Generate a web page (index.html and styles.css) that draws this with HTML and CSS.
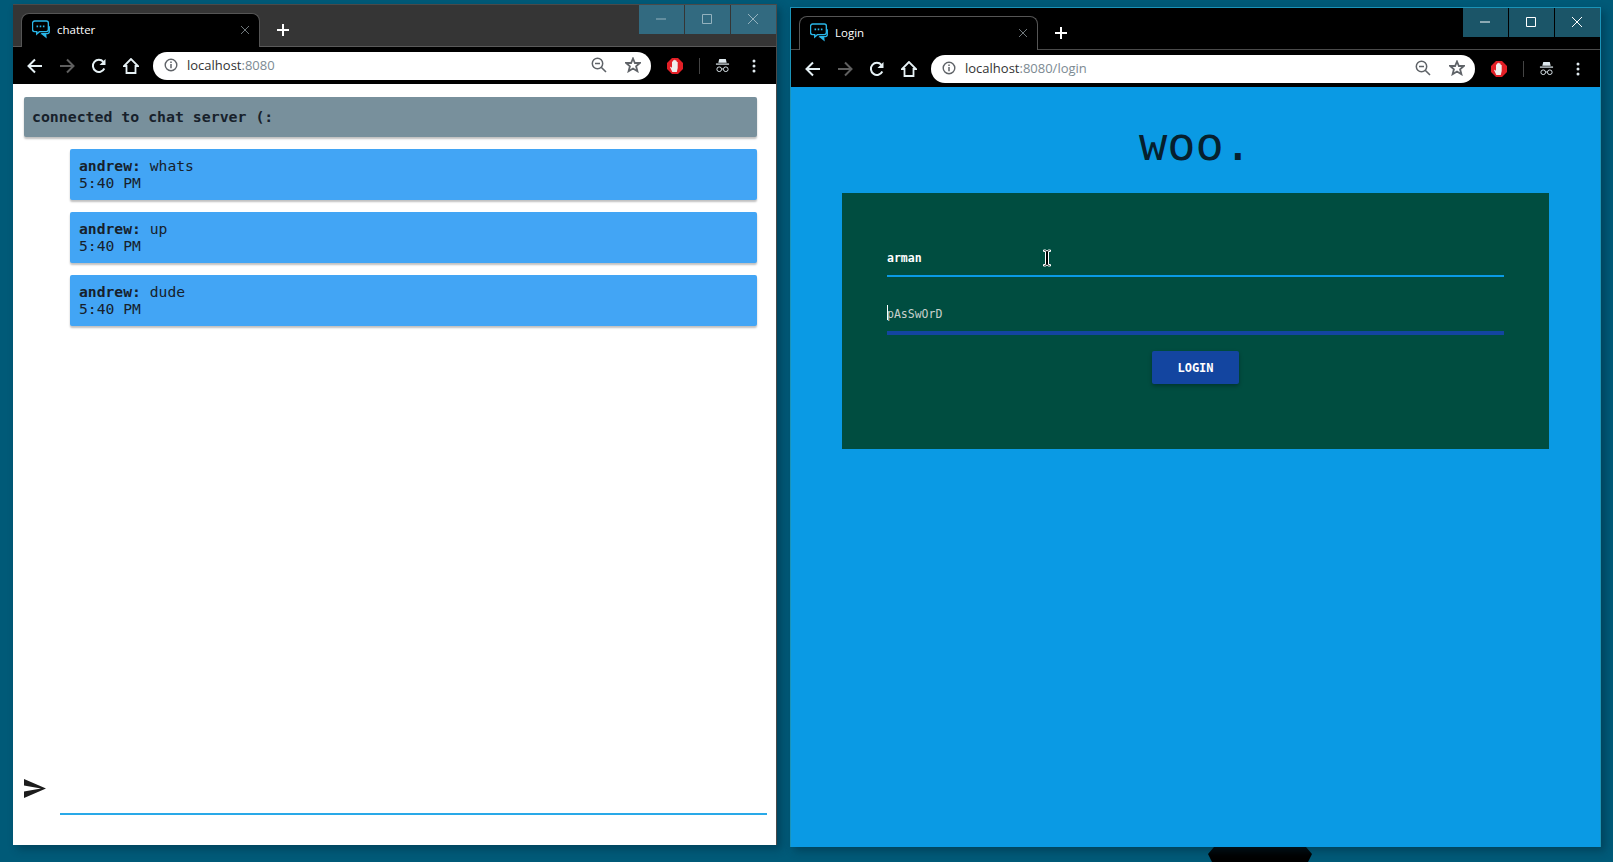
FILE: index.html

```html
<!DOCTYPE html>
<html lang="en">
  <head>
    <meta charset="UTF-8" />
    <title>chatter and login windows</title>
    <link rel="stylesheet" href="styles.css">
  </head>
  <body>
    <svg class="defs" width="0" height="0">
      <symbol id="i-chat" viewBox="0 0 18 18">
        <path d="M2.500 1h11a2 2 0 0 1 2 2v6a2 2 0 0 1-2 2H7l-2.500 2.200V11h-2a2 2 0 0 1-2-2V3a2 2 0 0 1 2-2z" fill="none" stroke="currentColor" stroke-width="1.300"/>
        <path d="M4.300 6h1.500M7.300 6h1.500M10.300 6h1.500" stroke="currentColor" stroke-width="1.500"/>
        <path d="M17 6v5a2.500 2.500 0 0 1-2.500 2.500h-1l.5 4-5-4H8l1-1.200h5.500a1.300 1.300 0 0 0 1.300-1.300V6z" fill="currentColor"/>
      </symbol>
      <symbol id="i-back" viewBox="0 0 16 16">
        <path d="M15 8H2M8 1.500 1.500 8 8 14.500" fill="none" stroke="currentColor" stroke-width="2"/>
      </symbol>
      <symbol id="i-fwd" viewBox="0 0 16 16">
        <path d="M1 8h13M8 1.500 14.500 8 8 14.500" fill="none" stroke="currentColor" stroke-width="2"/>
      </symbol>
      <symbol id="i-reload" viewBox="0 0 16 16">
        <path d="M13.300 10.500A6 6 0 1 1 12.400 3.900" fill="none" stroke="currentColor" stroke-width="2"/>
        <path d="M14.500 1v6h-6z" fill="currentColor"/>
      </symbol>
      <symbol id="i-home" viewBox="0 0 16 16">
        <path d="M8 1 1 8h2.500v7h9V8H15z" fill="none" stroke="currentColor" stroke-width="1.800" stroke-linejoin="miter"/>
      </symbol>
      <symbol id="i-info" viewBox="0 0 14 14">
        <circle cx="7" cy="7" r="5.800" fill="none" stroke="currentColor" stroke-width="1.400"/>
        <path d="M7 6v4.200M7 3.400v1.500" stroke="currentColor" stroke-width="1.500"/>
      </symbol>
      <symbol id="i-zoom" viewBox="0 0 16 16">
        <circle cx="6.500" cy="6.500" r="5.200" fill="none" stroke="currentColor" stroke-width="1.500"/>
        <path d="M4 6.500h5M10.200 10.200 15 15" stroke="currentColor" stroke-width="1.600"/>
      </symbol>
      <symbol id="i-star" viewBox="0 0 16 16">
        <path d="M8 1.500 9.900 6h5l-3.800 3.200 1.300 5L8 11.500l-4.400 2.700 1.300-5L1.100 6h5z" fill="none" stroke="currentColor" stroke-width="1.800"/>
      </symbol>
      <symbol id="i-adblock" viewBox="0 0 16 16">
        <path d="M5 0h6l5 5v6l-5 5H5l-5-5V5z" fill="#e21f26"/>
        <path d="M5.300 14 3 9l1 -.3 1 1.300V3.500l1 .1V2.300l1.200.1V1.800l1.300.1v.7l1.200.1v1.200l1 .1v6l-.9 4z" fill="#eeeeee"/>
      </symbol>
      <symbol id="i-incog" viewBox="0 0 16 16">
        <path d="M4.500 1h7l1 4h-9z" fill="currentColor"/>
        <path d="M1 6.500h14" stroke="currentColor" stroke-width="1.300"/>
        <circle cx="4.500" cy="12" r="2.500" fill="none" stroke="currentColor" stroke-width="1"/>
        <circle cx="11.500" cy="12" r="2.500" fill="none" stroke="currentColor" stroke-width="1"/>
        <path d="M7 11.700h2" stroke="currentColor"/>
      </symbol>
      <symbol id="i-more" viewBox="0 0 4 14">
        <circle cx="2" cy="2" r="1.500" fill="currentColor"/>
        <circle cx="2" cy="7" r="1.500" fill="currentColor"/>
        <circle cx="2" cy="12" r="1.500" fill="currentColor"/>
      </symbol>
      <symbol id="i-min" viewBox="0 0 10 10"><path d="M0 5h10" stroke="currentColor"/></symbol>
      <symbol id="i-max" viewBox="0 0 10 10"><path d="M.5.500h9v9h-9z" fill="none" stroke="currentColor"/></symbol>
      <symbol id="i-close" viewBox="0 0 10 10"><path d="M0 0l10 10M10 0 0 10" stroke="currentColor"/></symbol>
      <symbol id="i-plus" viewBox="0 0 12 12"><path d="M6 0v12M0 6h12" stroke="currentColor" stroke-width="2"/></symbol>
    </svg>

    <div class="taskbar-stub"></div>

    <!-- chat window -->
    <section class="window window-chat">
      <header class="titlebar">
        <div class="tab">
          <svg class="tab-icon"><use href="#i-chat"/></svg>
          <span class="tab-title">chatter</span>
          <svg class="tab-close"><use href="#i-close"/></svg>
        </div>
        <svg class="new-tab"><use href="#i-plus"/></svg>
        <div class="controls">
          <div class="control"><svg><use href="#i-min"/></svg></div>
          <div class="control"><svg><use href="#i-max"/></svg></div>
          <div class="control"><svg><use href="#i-close"/></svg></div>
        </div>
      </header>
      <nav class="toolbar">
        <svg class="nav-btn"><use href="#i-back"/></svg>
        <svg class="nav-btn off"><use href="#i-fwd"/></svg>
        <svg class="nav-btn"><use href="#i-reload"/></svg>
        <svg class="nav-btn"><use href="#i-home"/></svg>
        <div class="omnibox">
          <svg class="omni-info"><use href="#i-info"/></svg>
          <span class="url">localhost<span class="url-dim">:8080</span></span>
          <svg class="omni-zoom"><use href="#i-zoom"/></svg>
          <svg class="omni-star"><use href="#i-star"/></svg>
        </div>
        <svg class="ext"><use href="#i-adblock"/></svg>
        <div class="sep"></div>
        <svg class="incog"><use href="#i-incog"/></svg>
        <svg class="more"><use href="#i-more"/></svg>
      </nav>
      <main class="chat">
        <div class="status">connected to chat server (:</div>
        <div class="msg"><b>andrew:</b> whats<br>5:40 PM</div>
        <div class="msg"><b>andrew:</b> up<br>5:40 PM</div>
        <div class="msg"><b>andrew:</b> dude<br>5:40 PM</div>
        <div class="composer">
          <svg class="send" viewBox="0 0 22 19"><path d="M0 0 22 9.500 0 19v-6.500L17 9.500 0 6.500z" fill="#1c1c1c"/></svg>
          <div class="chat-input"></div>
        </div>
      </main>
    </section>

    <!-- login window -->
    <section class="window window-login">
      <header class="titlebar">
        <div class="tab">
          <svg class="tab-icon"><use href="#i-chat"/></svg>
          <span class="tab-title">Login</span>
          <svg class="tab-close"><use href="#i-close"/></svg>
        </div>
        <svg class="new-tab"><use href="#i-plus"/></svg>
        <div class="controls">
          <div class="control"><svg><use href="#i-min"/></svg></div>
          <div class="control"><svg><use href="#i-max"/></svg></div>
          <div class="control"><svg><use href="#i-close"/></svg></div>
        </div>
      </header>
      <nav class="toolbar">
        <svg class="nav-btn"><use href="#i-back"/></svg>
        <svg class="nav-btn off"><use href="#i-fwd"/></svg>
        <svg class="nav-btn"><use href="#i-reload"/></svg>
        <svg class="nav-btn"><use href="#i-home"/></svg>
        <div class="omnibox">
          <svg class="omni-info"><use href="#i-info"/></svg>
          <span class="url">localhost<span class="url-dim">:8080/login</span></span>
          <svg class="omni-zoom"><use href="#i-zoom"/></svg>
          <svg class="omni-star"><use href="#i-star"/></svg>
        </div>
        <svg class="ext"><use href="#i-adblock"/></svg>
        <div class="sep"></div>
        <svg class="incog"><use href="#i-incog"/></svg>
        <svg class="more"><use href="#i-more"/></svg>
      </nav>
      <main class="login">
        <h1 class="logo">woo.</h1>
        <form class="card">
          <div class="field field-user">arman</div>
          <div class="field field-pass"><span class="caret"></span>pAsSwOrD</div>
          <div class="btn">LOGIN</div>
        </form>
      </main>
    </section>

    <svg class="ibeam" viewBox="0 0 10 18"><path d="M1.500 1h2l1.500 1 1.500-1h2v1.500h-2v13h2V17h-2L5 16l-1.500 1h-2v-1.500h2v-13h-2z" fill="#000" stroke="#fff"/></svg>
  </body>
</html>
```

FILE: styles.css

```css
* { box-sizing: border-box; }
html, body { height: 100%; }
body {
  margin: 0;
  background: #005a78;
  overflow: hidden;
  position: relative;
  font-family: 'DejaVu Sans Mono', monospace;
}
.defs { position: absolute; }

.taskbar-stub {
  position: absolute;
  left: 1208px;
  top: 847px;
  width: 104px;
  height: 15px;
  background: #000;
  clip-path: polygon(6px 0, 98px 0, 104px 7px, 100px 15px, 4px 15px, 0 7px);
}

.window {
  position: absolute;
  display: flex;
  flex-direction: column;
  box-shadow: 4px 4px 8px rgba(0,40,60,0.45);
}
.window-chat {
  left: 13px;
  top: 4px;
  width: 764px;
  height: 841px;
  border: 1px solid #4a4a4a;
  border-width: 1px 1px 0 0;
}
.window-login {
  left: 790px;
  top: 7px;
  width: 811px;
  height: 840px;
  border: 1px solid #1b93b8;
  border-width: 1px 1px 0 1px;
}

.titlebar {
  position: relative;
  height: 42px;
  flex: none;
  background: #353535;
  border-bottom: 1px solid #5a5a5a;
  display: flex;
  align-items: flex-end;
  padding-left: 8px;
}
.window-login .titlebar {
  background: #000;
  border-bottom-color: #4a4a4a;
}
.tab {
  width: 239px;
  height: 34px;
  margin-bottom: -1px;
  background: #000;
  border: 1px solid #555;
  border-bottom: none;
  border-radius: 8px 8px 0 0;
  display: flex;
  align-items: center;
  padding: 0 9px 2px 10px;
  color: #fff;
  font: 11.500px 'Open Sans', sans-serif;
}
.tab-icon { width: 19px; height: 19px; color: #29b6e8; margin-right: 6px; }
.tab-title { flex: 1; margin-top: -1px; }
.tab-close { width: 8px; height: 8px; color: #8b959b; margin-right: 1px; }
.new-tab { width: 12px; height: 12px; color: #fff; margin: 0 0 10px 17px; }

/* window buttons */
.controls {
  position: absolute;
  top: 0;
  right: 0;
  display: flex;
  gap: 1px;
}
.control {
  width: 45px;
  height: 29px;
  padding: 0 2px 2px 0;
  background: #326a80;
  color: #94b2be;
  display: flex;
  align-items: center;
  justify-content: center;
}
.control svg { width: 10px; height: 10px; }
.window-login .control { background: #1b5568; color: #fff; }

.toolbar {
  flex: none;
  height: 37px;
  background: #000;
  display: flex;
  align-items: center;
  padding-left: 14px;
  color: #e6f1f5;
}
.nav-btn { width: 16px; height: 16px; margin-right: 16px; }
.nav-btn.off { color: #5f5f5f; }
.omnibox {
  width: 498px;
  height: 28px;
  margin-left: -2px;
  background: #fff;
  border-radius: 14px;
  display: flex;
  align-items: center;
  padding: 0 10px 2px 11px;
  font: 13px 'Open Sans', sans-serif;
}
.window-login .omnibox { width: 544px; }
.omni-info { width: 14px; height: 14px; color: #5f6368; margin-right: 9px; }
.url { flex: 1; color: #333; }
.url-dim { color: #7c8a92; }
.omni-zoom { width: 16px; height: 16px; color: #5f6368; margin-right: 18px; }
.omni-star { width: 16px; height: 16px; color: #5f6368; }
.ext { width: 16px; height: 16px; margin-left: 16px; }
.sep { width: 1px; height: 16px; background: #444; margin-left: 16px; }
.incog { width: 15px; height: 15px; margin-left: 15px; color: #dfe9ee; }
.more { width: 4px; height: 14px; margin-left: 22px; color: #dfe9ee; }

/* chat page */
.chat {
  flex: 1;
  background: #fff;
  padding: 13px 19px 0 11px;
  display: flex;
  flex-direction: column;
  font-size: 14.700px;
  color: #17212b;
}
.status {
  height: 40px;
  line-height: 40px;
  padding-left: 8px;
  background: #78909c;
  font-size: 14.850px;
  font-weight: bold;
  border-radius: 2px;
  box-shadow: 0 2px 2px rgba(0,0,0,0.25);
  margin-bottom: 12px;
}
.msg {
  height: 51px;
  margin: 0 0 12px 46px;
  padding: 8px 9px;
  background: #42a5f5;
  line-height: 17px;
  border-radius: 2px;
  box-shadow: 0 2px 2px rgba(0,0,0,0.25);
}
.composer {
  margin-top: auto;
  display: flex;
  align-items: flex-start;
  height: 66px;
  margin-right: -10px;
}
.send { width: 22px; height: 19px; flex: none; }
.chat-input {
  flex: 1;
  margin: 34px 0 0 14px;
  height: 2px;
  background: #29a9e8;
}

/* login page */
.login {
  flex: 1;
  background: #0a9ae4;
  padding: 0 51px;
}
.logo {
  margin: 0;
  height: 106px;
  padding-top: 31px;
  text-align: center;
  font: normal 47px/52px 'DejaVu Sans Mono', monospace;
  color: #06202e;
}
.card {
  height: 256px;
  background: #004d40;
  padding: 49px 45px 0;
  display: flex;
  flex-direction: column;
  font-size: 11.500px;
}
.field {
  height: 35px;
  line-height: 32px;
  color: #fff;
  font-weight: bold;
}
.field-user { border-bottom: 2px solid #0a9ae4; }
.field-pass {
  position: relative;
  margin-top: 19px;
  height: 39px;
  line-height: 36px;
  border-bottom: 4px solid #1345a0;
  color: #c8d0cc;
  font-weight: normal;
}
.caret {
  position: absolute;
  left: 0;
  top: 9px;
  width: 1px;
  height: 15px;
  background: #fff;
}
.btn {
  align-self: center;
  width: 87px;
  height: 33px;
  margin-top: 16px;
  background: #1345a0;
  color: #fff;
  font-size: 12px;
  font-weight: bold;
  text-align: center;
  line-height: 35px;
  border-radius: 2px;
  box-shadow: 0 2px 4px rgba(0,0,0,0.3);
}

.ibeam {
  position: absolute;
  left: 1042px;
  top: 249px;
  width: 10px;
  height: 18px;
}
```
